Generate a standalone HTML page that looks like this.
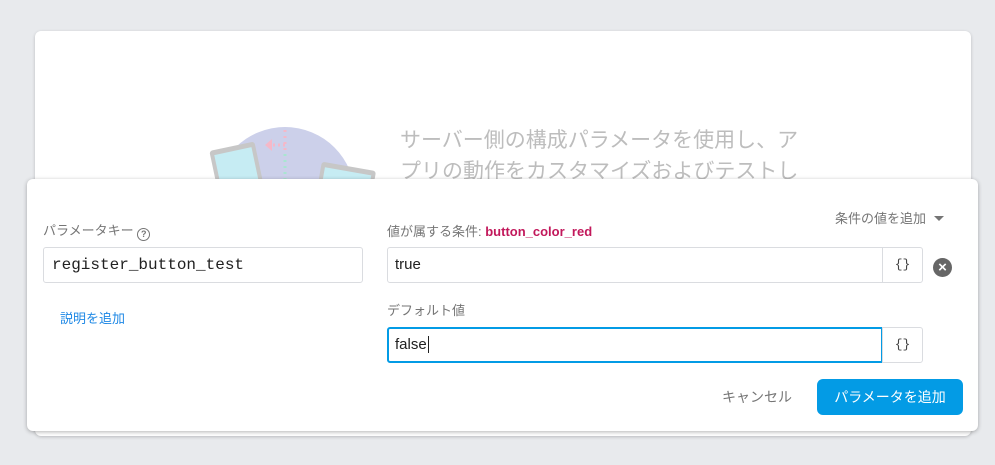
<!DOCTYPE html>
<html><head><meta charset="utf-8"><style>
body{margin:0;width:995px;height:465px;background:#e8eaed;position:relative;overflow:hidden;font-family:"Liberation Sans","Noto Sans CJK JP",sans-serif;}
.back{position:absolute;left:35px;top:31px;width:936px;height:405px;background:#fff;border-radius:6px;box-shadow:0 1px 3px rgba(0,0,0,.2);overflow:hidden}
.front{position:absolute;left:27px;top:179px;width:951px;height:252px;background:#fff;border-radius:6px;box-shadow:0 1px 4px rgba(0,0,0,.3)}
.abs{position:absolute}
.lbl{font-size:13px;color:#757575}
.inp{position:absolute;border:1px solid #dadce0;border-radius:3px;background:#fff;box-sizing:border-box}
.br{position:absolute;border:1px solid #dadce0;border-radius:0 3px 3px 0;width:41px;height:36px;box-sizing:border-box;font-size:13px;color:#444;text-align:center;line-height:34px;font-family:"Liberation Mono",monospace}
</style></head><body>
<div class="back">
<svg class="abs" style="left:170px;top:85px" width="180" height="70" viewBox="0 0 180 70">
<circle cx="80" cy="81" r="70" fill="#ccd0ea"/>
<g transform="rotate(-12 30 50)"><rect x="8" y="30" width="46" height="60" rx="3" fill="#c7c7c7"/><rect x="12" y="35" width="38" height="50" fill="#c6ecf3"/></g>
<g transform="rotate(10 140 70)"><rect x="113" y="50" width="55" height="50" rx="3" fill="#c7c7c7"/><rect x="117" y="55" width="47" height="45" fill="#c6ecf3"/></g>
<line x1="80" y1="14" x2="80" y2="34" stroke="#f5b8c8" stroke-width="3" stroke-dasharray="2 4"/>
<line x1="80" y1="38" x2="80" y2="70" stroke="#a8e6d0" stroke-width="3" stroke-dasharray="2 4"/>
<line x1="68" y1="29" x2="80" y2="29" stroke="#f5b8c8" stroke-width="3" stroke-dasharray="2 3"/>
<path d="M60 29 l7 -6 v12z" fill="#f5b8c8"/>
</svg>
<div class="abs" style="left:365px;top:94px;font-size:21px;line-height:31px;color:#bdbdbd;width:400px">サーバー側の構成パラメータを使用し、アプリの動作をカスタマイズおよびテストし</div>
</div>
<div class="front">
<div class="abs lbl" style="left:16px;top:41px">パラメータキー <span style="display:inline-block;width:11px;height:11px;border:1.5px solid #757575;border-radius:50%;font-size:9px;line-height:11px;text-align:center;font-weight:bold;vertical-align:-2px">?</span></div>
<div class="inp" style="left:16px;top:68px;width:320px;height:36px"><span class="abs" style="left:8px;top:8px;font-family:'Liberation Mono',monospace;font-size:16px;color:#212121">register_button_test</span></div>
<div class="abs" style="left:33px;top:129px;font-size:13px;color:#1e88e5">説明を追加</div>
<div class="abs lbl" style="left:360px;top:42px">値が属する条件: <b style="color:#c2185b">button_color_red</b></div>
<div class="abs" style="left:808px;top:29px;font-size:13px;color:#757575">条件の値を追加 <span style="display:inline-block;border:5px solid transparent;border-top-color:#757575;border-bottom:0;vertical-align:2px;margin-left:4px"></span></div>
<div class="inp" style="left:360px;top:68px;width:496px;height:36px;border-radius:3px 0 0 3px"><span class="abs" style="left:7px;top:8px;font-size:15px;color:#212121">true</span></div>
<div class="br" style="left:855px;top:68px">{}</div>
<div class="abs" style="left:906px;top:79px;width:19px;height:19px;border-radius:50%;background:#666;color:#fff;font-size:15px;line-height:19px;text-align:center;font-weight:bold">×</div>
<div class="abs lbl" style="left:360px;top:121px">デフォルト値</div>
<div class="inp" style="left:360px;top:148px;width:496px;height:36px;border:2px solid #039be5;border-radius:3px 0 0 3px"><span class="abs" style="left:6px;top:7px;font-size:15px;color:#212121;border-right:1px solid #212121;padding-right:1px">false</span></div>
<div class="br" style="left:855px;top:148px">{}</div>
<div class="abs" style="left:695px;top:208px;font-size:14px;color:#757575">キャンセル</div>
<div class="abs" style="left:790px;top:200px;width:146px;height:36px;background:#039be5;border-radius:6px;color:#fff;font-size:14px;text-align:center;line-height:36px">パラメータを追加</div>
</div>
</body></html>
